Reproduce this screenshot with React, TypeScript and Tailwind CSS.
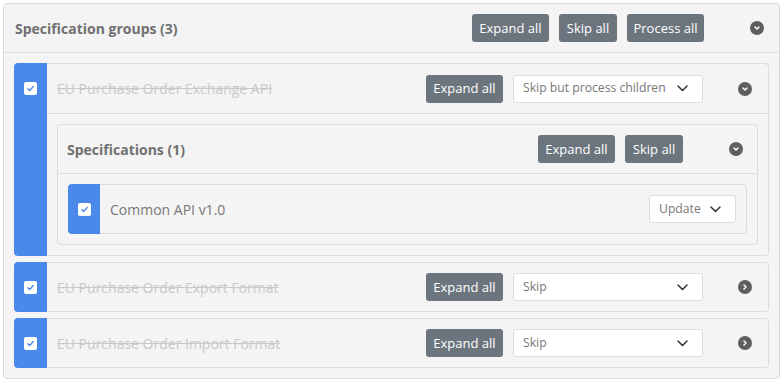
import React from "react";

const Check = () => (
  <div className="flex h-[13px] w-[13px] items-center justify-center rounded-[2px] bg-white">
    <svg width="9" height="9" viewBox="0 0 10 10">
      <path d="M2 5.2 L4.2 7.2 L8 2.8" fill="none" stroke="#4a89ea" strokeWidth="1.4" strokeLinecap="round" strokeLinejoin="round" />
    </svg>
  </div>
);

const Toggle = ({ open }: { open: boolean }) => (
  <div className="flex h-[14px] w-[14px] items-center justify-center rounded-full bg-[#5f5f5f]">
    <svg width="8" height="8" viewBox="0 0 8 8">
      {open ? (
        <path d="M2 3 L4 5 L6 3" fill="none" stroke="#fff" strokeWidth="1.5" strokeLinecap="round" strokeLinejoin="round" />
      ) : (
        <path d="M3 2 L5 4 L3 6" fill="none" stroke="#fff" strokeWidth="1.5" strokeLinecap="round" strokeLinejoin="round" />
      )}
    </svg>
  </div>
);

const Btn = ({ label, width }: { label: string; width: string }) => (
  <button className={`h-[28px] whitespace-nowrap rounded-[3px] bg-[#6c757d] text-center text-[13px] leading-none text-white ${width}`}>
    {label}
  </button>
);

const Select = ({ value, width }: { value: string; width: string }) => (
  <div className={`flex h-[28px] items-center justify-between rounded-[3px] border border-[#dcdcdc] bg-white pl-[9px] pr-[14px] text-[12.2px] text-[#777] ${width}`}>
    <span>{value}</span>
    <svg width="11" height="7" viewBox="0 0 11 7">
      <path d="M1 1 L5.5 5.5 L10 1" fill="none" stroke="#333" strokeWidth="1.5" strokeLinecap="round" strokeLinejoin="round" />
    </svg>
  </div>
);

const GroupRow = ({ title, mode, open, children }: { title: string; mode: string; open: boolean; children?: React.ReactNode }) => (
  <div className="flex">
    <div className="flex w-[33px] shrink-0 justify-center rounded-l-[4px] bg-[#4a89ea] pt-[19px]">
      <Check />
    </div>
    <div className="flex-1 rounded-r-[4px] border border-l-0 border-[#dcdcdc]">
      <div className={`flex items-center pl-[10px] pr-[16px] ${open ? "h-[50px] border-b border-[#dcdcdc]" : "h-[48px]"}`}>
        <span className="flex-1 text-[14px] text-[#c8c8c8] line-through">{title}</span>
        <Btn label="Expand all" width="w-[77px]" />
        <div className="ml-[10px]">
          <Select value={mode} width="w-[190px]" />
        </div>
        <div className="ml-[35px]">
          <Toggle open={open} />
        </div>
      </div>
      {children}
    </div>
  </div>
);

export default function App() {
  return (
    <div className="h-[381px] w-[783px] bg-white p-[3px] font-['Open_Sans',sans-serif]">
      <div className="w-[777px] rounded-[4px] border border-[#dcdcdc] bg-[#f4f4f4]">
        <div className="flex h-[49px] items-center border-b border-[#dcdcdc] pl-[11px] pr-[15px]">
          <span className="flex-1 text-[14px] font-bold text-[#707070]">Specification groups (3)</span>
          <div className="flex gap-[10px]">
            <Btn label="Expand all" width="w-[77px]" />
            <Btn label="Skip all" width="w-[58px]" />
            <Btn label="Process all" width="w-[77px]" />
          </div>
          <div className="ml-[46px]">
            <Toggle open />
          </div>
        </div>
        <div className="flex flex-col gap-[6px] px-[10px] py-[10px]">
          <GroupRow title="EU Purchase Order Exchange API" mode="Skip but process children" open>
            <div className="p-[10px]">
              <div className="rounded-[4px] border border-[#dcdcdc]">
                <div className="flex h-[49px] items-center border-b border-[#dcdcdc] pl-[9px] pr-[14px]">
                  <span className="flex-1 text-[14px] font-bold text-[#707070]">Specifications (1)</span>
                  <div className="flex gap-[10px]">
                    <Btn label="Expand all" width="w-[77px]" />
                    <Btn label="Skip all" width="w-[58px]" />
                  </div>
                  <div className="ml-[46px]">
                    <Toggle open />
                  </div>
                </div>
                <div className="p-[10px]">
                  <div className="flex h-[50px]">
                    <div className="flex w-[32px] shrink-0 items-center justify-center rounded-l-[4px] bg-[#4a89ea]">
                      <Check />
                    </div>
                    <div className="flex flex-1 items-center rounded-r-[4px] border border-l-0 border-[#dcdcdc] pl-[10px] pr-[10px]">
                      <span className="flex-1 text-[14px] text-[#777]">Common API v1.0</span>
                      <Select value="Update" width="w-[87px]" />
                    </div>
                  </div>
                </div>
              </div>
            </div>
          </GroupRow>
          <GroupRow title="EU Purchase Order Export Format" mode="Skip" open={false} />
          <GroupRow title="EU Purchase Order Import Format" mode="Skip" open={false} />
        </div>
      </div>
    </div>
  );
}
